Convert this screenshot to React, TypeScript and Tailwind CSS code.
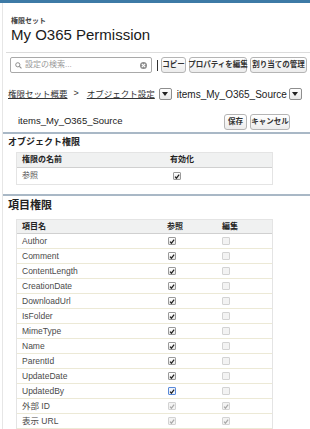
import React from "react";

const FONT = { fontFamily: '"Liberation Sans", "Noto Sans CJK JP", sans-serif' };

function Check({ checked, disabled, focused }: { checked?: boolean; disabled?: boolean; focused?: boolean }) {
  let box = "border-[#9a9a9a] bg-gradient-to-b from-[#ffffff] to-[#e6e6e6]";
  let stroke = "#1e1e1e";
  if (disabled) {
    box = "border-[#d3d3d3] bg-[#f3f3f3]";
    stroke = "#a8a8a8";
  }
  if (focused) {
    box = "border-[#5a8ad8] bg-[#eef3fc]";
  }
  return (
    <div className={`w-[8px] h-[8px] border rounded-[1px] flex items-center justify-center ${box}`}>
      {checked && (
        <svg width="7" height="7" viewBox="0 0 10 10">
          <path d="M1.8 5.2 L4 7.8 L8.6 2" fill="none" stroke={stroke} strokeWidth="2" />
        </svg>
      )}
    </div>
  );
}

function Btn({ children, className = "" }: { children: React.ReactNode; className?: string }) {
  return (
    <div
      className={`h-[16px] px-[2px] flex items-center justify-center border border-[#b5b5b5] rounded-[3px] bg-gradient-to-b from-[#ffffff] to-[#ececec] text-[7.5px] font-bold text-[#333] whitespace-nowrap ${className}`}
    >
      {children}
    </div>
  );
}

function Drop() {
  return (
    <div className="w-[13px] h-[12px] border border-[#8e8e8e] rounded-[2px] bg-gradient-to-b from-[#ffffff] to-[#e8e8e8] flex items-center justify-center">
      <svg width="6" height="4" viewBox="0 0 6 4">
        <path d="M0 0 L6 0 L3 4 Z" fill="#222" />
      </svg>
    </div>
  );
}

const rows: { name: string; read: boolean; edit: boolean; dis?: boolean; focus?: boolean }[] = [
  { name: "Author", read: true, edit: false },
  { name: "Comment", read: true, edit: false },
  { name: "ContentLength", read: true, edit: false },
  { name: "CreationDate", read: true, edit: false },
  { name: "DownloadUrl", read: true, edit: false },
  { name: "IsFolder", read: true, edit: false },
  { name: "MimeType", read: true, edit: false },
  { name: "Name", read: true, edit: false },
  { name: "ParentId", read: true, edit: false },
  { name: "UpdateDate", read: true, edit: false },
  { name: "UpdatedBy", read: true, edit: false, focus: true },
  { name: "外部 ID", read: true, edit: true, dis: true },
  { name: "表示 URL", read: true, edit: true, dis: true },
];

export default function App() {
  return (
    <div className="relative w-[310px] h-[429px] overflow-hidden bg-white text-[#333]" style={FONT}>
      <div className="h-[3px] bg-[#3d7aa6]" />
      <div className="border-l border-[#e6e6e6] ml-[2px] h-[426px]">
        {/* header */}
        <div className="ml-[3px] pl-[5px] border-b border-[#dcdcdc] pt-[14px] pb-[9px]">
          <div className="text-[7px] leading-[8px] font-bold text-[#444]">権限セット</div>
          <div className="mt-[2px] text-[15px] leading-[16px] text-[#1a1a1a]">My O365 Permission</div>
        </div>
        {/* search row */}
        <div className="mt-[4px] flex items-center h-[16px] pl-[7px]">
          <div className="w-[142px] h-[16px] border border-[#a9a9a9] rounded-[2px] flex items-center px-[4px] bg-white">
            <svg width="7" height="7" viewBox="0 0 10 10">
              <circle cx="4" cy="4" r="3" fill="none" stroke="#8a8a8a" strokeWidth="1.4" />
              <path d="M6.3 6.3 L9.2 9.2" stroke="#8a8a8a" strokeWidth="1.6" />
            </svg>
            <span className="ml-[3px] text-[8px] text-[#9a9a9a] flex-1">設定の検索...</span>
            <div className="w-[7px] h-[7px] rounded-full bg-[#8c8c8c] flex items-center justify-center">
              <svg width="5" height="5" viewBox="0 0 6 6">
                <path d="M1 1 L5 5 M5 1 L1 5" stroke="#fff" strokeWidth="1.3" />
              </svg>
            </div>
          </div>
          <div className="ml-[5px] w-[1px] h-[11px] bg-[#333]" />
          <div className="ml-[3px] flex gap-[3px]">
            <Btn className="w-[25px]">コピー</Btn>
            <Btn className="w-[58px]">プロパティを編集</Btn>
            <Btn className="w-[57px]">割り当ての管理</Btn>
          </div>
        </div>
        {/* breadcrumb */}
        <div className="mt-[14px] h-[14px] flex items-center pl-[5px] text-[8.5px] text-[#333]">
          <span className="underline">権限セット概要</span>
          <span className="ml-[6px] mr-[8px] text-[9px]">&gt;</span>
          <span className="underline">オブジェクト設定</span>
          <div className="ml-[4px]"><Drop /></div>
          <span className="ml-[5px] text-[10px] text-[#222]">items_My_O365_Source</span>
          <div className="ml-[2px]"><Drop /></div>
        </div>
        {/* object header */}
        <div className="mt-[14px] h-[13px] flex items-center pl-[15px] pr-[20px]">
          <span className="text-[9.5px] text-[#1a1a1a] flex-1">items_My_O365_Source</span>
          <div className="flex gap-[3px]">
            <Btn className="w-[23px] h-[13px]">保存</Btn>
            <Btn className="w-[40px] h-[13px]">キャンセル</Btn>
          </div>
        </div>
        <div className="mt-[4px] h-[2px] bg-[#a9b8c6]" />
        {/* object permissions */}
        <div className="mt-[2px] h-[12px] pl-[5px] text-[9px] leading-[12px] font-bold text-[#222]">オブジェクト権限</div>
        <div className="mt-[4px] ml-[13px] w-[257px] border border-[#e4e4e4]">
          <div className="grid grid-cols-[150px_1fr] h-[15px] items-center bg-[#f0f1f1] border-b border-[#d0d0d0] text-[8px] font-bold text-[#222]">
            <div className="pl-[5px]">権限の名前</div>
            <div className="pl-[3px]">有効化</div>
          </div>
          <div className="grid grid-cols-[150px_1fr] h-[16px] items-center text-[8px] text-[#555]">
            <div className="pl-[5px]">参照</div>
            <div className="pl-[6px]"><Check checked /></div>
          </div>
        </div>
        <div className="mt-[9px] h-[2px] bg-[#a9b8c6]" />
        {/* field permissions */}
        <div className="mt-[2px] h-[14px] pl-[5px] text-[11px] leading-[14px] font-bold text-[#222]">項目権限</div>
        <div className="mt-[7px] ml-[13px] w-[257px] border border-[#e4e4e4]">
          <div className="grid grid-cols-[145px_55px_1fr] h-[14px] items-center bg-[#f0f1f1] border-b border-[#d0d0d0] text-[8px] font-bold text-[#222]">
            <div className="pl-[5px]">項目名</div>
            <div className="pl-[5px]">参照</div>
            <div className="pl-[5px]">編集</div>
          </div>
          {rows.map((r) => (
            <div
              key={r.name}
              className="grid grid-cols-[145px_55px_1fr] h-[15px] items-center border-b border-[#ece9d6] text-[8.5px] text-[#4a4a4a]"
            >
              <div className="pl-[5px]">{r.name}</div>
              <div className="pl-[6px]"><Check checked={r.read} disabled={r.dis} focused={r.focus} /></div>
              <div className="pl-[5px]"><Check checked={r.edit} disabled /></div>
            </div>
          ))}
        </div>
      </div>
    </div>
  );
}
